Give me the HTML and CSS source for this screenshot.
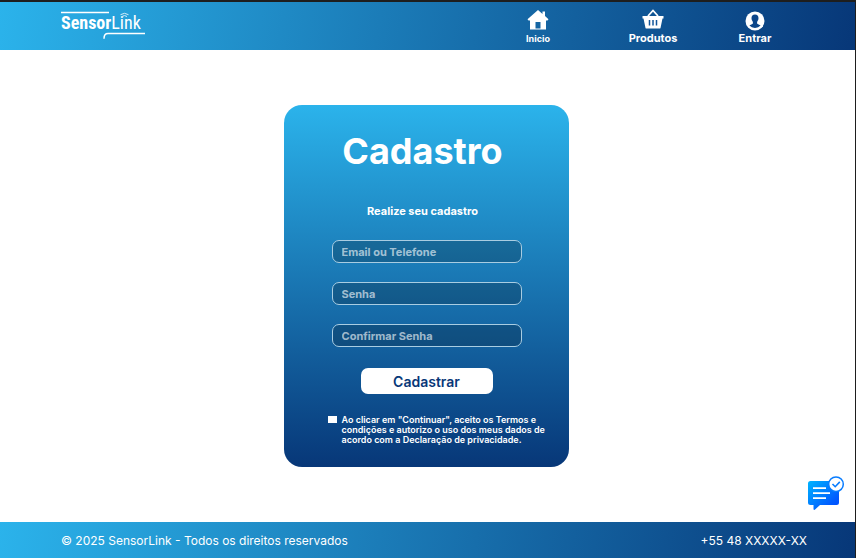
FILE: index.html
```html
<!DOCTYPE html>
<html lang="pt-BR">
<head>
<meta charset="utf-8">
<meta name="viewport" content="width=device-width, initial-scale=1">
<title>SensorLink - Cadastro</title>
<link rel="stylesheet" href="styles.css">
</head>
<body>
<header class="topbar">
  <a class="logo" href="#">
    <span class="logo-text"><b>Sensor</b>Link</span>
    <svg class="logo-lines" viewBox="0 0 86 30" aria-hidden="true">
      <path d="M1 1.6H49M44 27.8C44 24.2 45.500 22.600 48 22.600H85" fill="none" stroke="#fff" stroke-width="1.500"/>
      <path d="M60.500 3.700Q64.500 .9 68.500 3.700M62 5.500Q64.500 3.600 67 5.500" fill="none" stroke="#d5eefa" stroke-width="1"/>
    </svg>
  </a>
  <nav class="nav">
    <a class="nav-item nav-home" href="#">
      <svg width="22" height="22" viewBox="0 0 22 22" aria-hidden="true">
        <path fill="#fff" fill-rule="evenodd" d="M11 1 15.500 4.900V2.500H18V7.100L21.500 10.200 20.500 11.500H19V20.500H3V11.500H1.500L.5 10.200ZM8.500 13V19.500H13.500V13Z"/>
      </svg>
      <span>Inicio</span>
    </a>
    <a class="nav-item" href="#">
      <svg width="22" height="22" viewBox="0 0 22 22" aria-hidden="true">
        <path d="M6 7 11 1.500 16 7" fill="none" stroke="#fff" stroke-width="1.800"/>
        <path fill="#fff" d="M.5 7H21.500V9.500H20.500L18.500 19Q18.300 19.500 17.500 19.500H4.500Q3.700 19.500 3.500 19L1.500 9.500H.5Z"/>
        <path d="M7.500 11V16.500M11 11V16.500M14.500 11V16.500" stroke="#12559a" stroke-width="1.500"/>
      </svg>
      <span>Produtos</span>
    </a>
    <a class="nav-item" href="#">
      <svg width="20" height="20" viewBox="0 0 20 20" aria-hidden="true">
        <circle cx="10" cy="10" r="9.500" fill="#fff"/>
        <path fill="#0c468a" d="M10 3.500C12.300 3.500 13.600 5 13.500 7.300 13.400 9 12.800 9.900 12.100 10.900V12.400C12.600 13.300 14.600 13.400 15.600 14.600Q13.500 17 10 17T4.400 14.600C5.400 13.400 7.400 13.300 7.900 12.400V10.900C7.200 9.900 6.600 9 6.500 7.300 6.400 5 7.700 3.500 10 3.500Z"/>
      </svg>
      <span>Entrar</span>
    </a>
  </nav>
</header>

<main class="main">
  <form class="card">
    <h1 class="title">Cadastro</h1>
    <p class="subtitle">Realize seu cadastro</p>
    <div class="fields">
      <input class="field" type="text" placeholder="Email ou Telefone" aria-label="Email ou Telefone">
      <input class="field" type="password" placeholder="Senha" aria-label="Senha">
      <input class="field" type="password" placeholder="Confirmar Senha" aria-label="Confirmar Senha">
    </div>
    <button class="submit" type="submit">Cadastrar</button>
    <div class="terms">
      <input class="check" type="checkbox" id="terms">
      <label for="terms">Ao clicar em "Continuar", aceito os Termos e condições e autorizo o uso dos meus dados de acordo com a Declaração de privacidade.</label>
    </div>
  </form>
  <button class="chat" type="button" aria-label="Chat">
    <svg width="38" height="36" viewBox="0 0 38 36" aria-hidden="true">
      <defs>
        <linearGradient id="chat-fill" x1="0" y1="0" x2="1" y2="1">
          <stop offset="0" stop-color="#00b4ff"/>
          <stop offset=".75" stop-color="#005cff"/>
          <stop offset="1" stop-color="#0048ff"/>
        </linearGradient>
      </defs>
      <path fill="url(#chat-fill)" d="M3.500 5H29.500Q32 5 32 7.500V26.500Q32 29 29.500 29H13L7.500 34 6.500 33.500V29H3.500Q1 29 1 26.500V7.500Q1 5 3.500 5Z"/>
      <path d="M6 12.200H19M6 17.200H23M6 22.200H19" stroke="#fff" stroke-width="1.700"/>
      <circle cx="29" cy="8.200" r="7.300" fill="#fff" stroke="#087cff" stroke-width="1.500"/>
      <path d="M25.500 8 28.200 10.700 32.800 5.900" fill="none" stroke="#087cff" stroke-width="1.600"/>
    </svg>
  </button>
</main>

<footer class="footer">
  <span>© 2025 SensorLink - Todos os direitos reservados</span>
  <span>+55 48 XXXXX-XX</span>
</footer>
</body>
</html>
```
FILE: styles.css
```css
* {
  box-sizing: border-box;
}

body {
  margin: 0;
  min-height: 100vh;
  display: flex;
  flex-direction: column;
  border-top: 2px solid #1e1e1e;
  border-right: 1px solid #1e1e1e;
  background: #fff;
  color: #fff;
  font-family: Inter, "Liberation Sans", sans-serif;
}

.topbar,
.footer {
  display: flex;
  justify-content: space-between;
  background: linear-gradient(100deg, #2bb3eb, #073778);
}

.topbar {
  height: 48px;
  padding: 0 70px 0 60px;
}

.logo {
  position: relative;
  width: 86px;
  height: 30px;
  margin-top: 9px;
  color: #fff;
  text-decoration: none;
}

.logo-text {
  display: block;
  padding-left: 1px;
  font-family: "Roboto Condensed", "Liberation Sans Narrow", "Liberation Sans", sans-serif;
  font-size: 18px;
  line-height: 24px;
  white-space: nowrap;
}

.logo-lines {
  position: absolute;
  inset: 0;
}

.nav {
  display: flex;
  gap: 42px;
}

.nav-item {
  display: flex;
  flex-direction: column;
  align-items: center;
  justify-content: flex-end;
  width: 60px;
  height: 44px;
  color: #fff;
  font-size: 11px;
  font-weight: 700;
  line-height: 15px;
  text-decoration: none;
}

.nav-home {
  margin-right: 13px;
  font-size: 9px;
}

.main {
  position: relative;
  flex: 1;
  display: flex;
  align-items: center;
  justify-content: center;
  padding-right: 2px;
}

.card {
  display: flex;
  flex-direction: column;
  align-items: center;
  width: 285px;
  padding: 24px 32px 22px;
  border-radius: 18px;
  background: linear-gradient(#2bb3eb, #073778);
}

.title,
.subtitle {
  margin: 0;
  padding-right: 8px;
  font-weight: 700;
}

.title {
  font-size: 36px;
  line-height: 44px;
}

.subtitle {
  margin-top: 30px;
  font-size: 11px;
  line-height: 16px;
}

.fields {
  display: grid;
  gap: 19px;
  width: 190px;
  margin-top: 21px;
}

.field {
  width: 100%;
  height: 23px;
  padding: 0 9px;
  border: 1px solid #a9cde2;
  border-radius: 7px;
  background: rgba(0, 0, 0, 0.2);
  color: #fff;
  font: 700 11px Inter, "Liberation Sans", sans-serif;
}

.field::placeholder {
  color: rgba(255, 255, 255, 0.62);
}

.submit {
  width: 132px;
  height: 26px;
  margin-top: 21px;
  padding: 0;
  border: 0;
  border-radius: 7px;
  background: #fff;
  color: #073778;
  font: 600 14px Inter, "Liberation Sans", sans-serif;
}

.terms {
  display: flex;
  gap: 5px;
  width: 218px;
  margin-top: 21px;
  margin-left: 20px;
  font-size: 9px;
  font-weight: 600;
  line-height: 10px;
}

.check {
  appearance: none;
  flex: none;
  width: 9px;
  height: 7px;
  margin: 1px 0 0;
  background: #fff;
}

.check:checked {
  background: #2bb3eb;
}

.chat {
  position: absolute;
  right: 10px;
  bottom: 10px;
  width: 38px;
  height: 36px;
  padding: 0;
  border: 0;
  background: none;
}

.chat svg {
  display: block;
}

.footer {
  align-items: center;
  height: 36px;
  padding: 0 48px 0 61px;
  font-size: 12px;
}
```
